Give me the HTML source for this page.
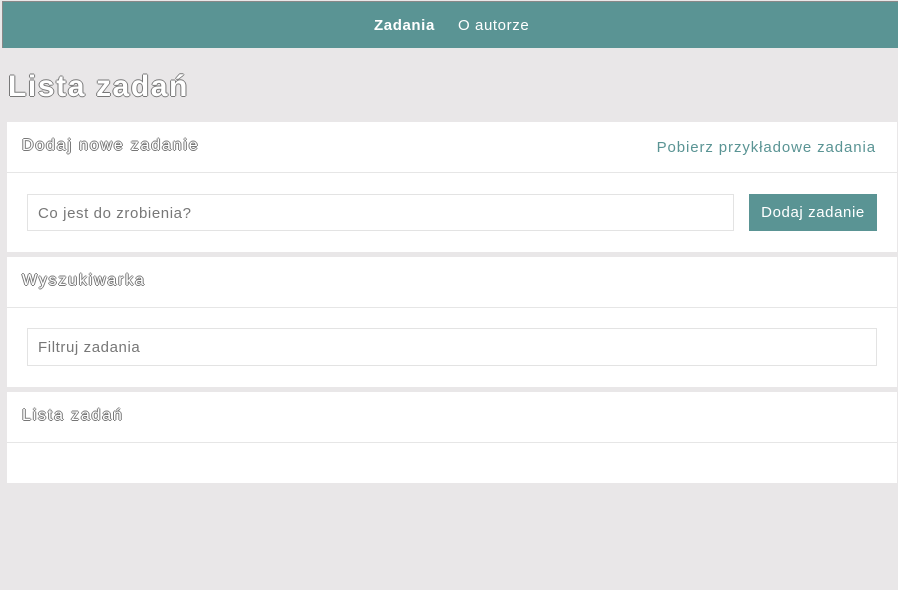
<!DOCTYPE html><html><head><style>
body{margin:0;width:898px;height:590px;background:#e9e7e8;font-family:"Liberation Sans",sans-serif;position:relative;overflow:hidden;letter-spacing:.6px}
.nav{position:absolute;left:2px;top:1px;right:0;height:46px;background:#5a9494;border-top:1px solid #888;border-left:1px solid #888}
.nav span{position:absolute;top:15px;color:#fff;font-size:15px}
.out{color:#fff;text-shadow:-1px 0 #777,1px 0 #777,0 -1px #777,0 1px #777}
h1{position:absolute;left:8px;top:70px;margin:0;font-size:30px;font-weight:bold;letter-spacing:1.6px}
.card{position:absolute;left:7px;width:890px;background:#fff}
.hd{height:50px;border-bottom:1px solid #e6e6e6;position:relative}
.hd .t{position:absolute;left:15px;top:15px;font-size:16px;letter-spacing:1.8px}
.inp{position:absolute;height:37px;border:1px solid #e3e3e3;box-sizing:border-box;color:#777;font-size:15px;padding:10px 10px;background:#fff}
</style></head><body>
<div class="nav"><span style="left:371px;font-weight:bold">Zadania</span><span style="left:455px">O autorze</span></div>
<h1 class="out">Lista zadań</h1>
<div class="card" style="top:122px;height:130px"><div class="hd"><span class="t out">Dodaj nowe zadanie</span><span style="position:absolute;right:21px;top:17px;color:#5a9494;font-size:15px;letter-spacing:.9px">Pobierz przykładowe zadania</span></div>
<div class="inp" style="left:20px;top:72px;width:707px">Co jest do zrobienia?</div>
<div style="position:absolute;left:742px;top:72px;width:128px;height:37px;background:#5a9494;color:#fff;font-size:15px;text-align:center;line-height:37px">Dodaj zadanie</div></div>
<div class="card" style="top:257px;height:130px"><div class="hd"><span class="t out">Wyszukiwarka</span></div>
<div class="inp" style="left:20px;top:71px;width:850px;height:38px">Filtruj zadania</div></div>
<div class="card" style="top:392px;height:91px"><div class="hd"><span class="t out">Lista zadań</span></div></div>
</body></html>
